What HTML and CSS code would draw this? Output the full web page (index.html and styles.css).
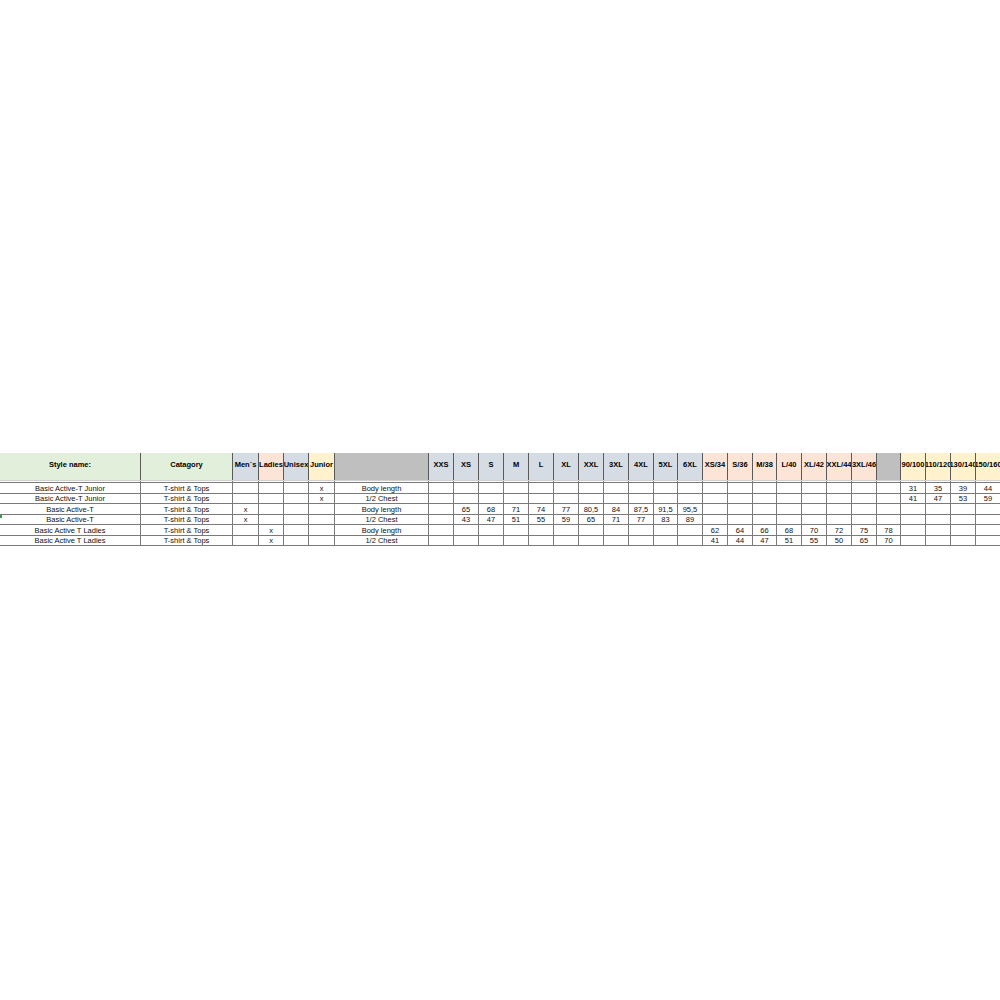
FILE: index.html
```html
<!DOCTYPE html>
<html>
<head>
<meta charset="utf-8">
<link rel="stylesheet" href="styles.css">
</head>
<body>
<div class="sheet">
<span class="flag"></span>
<table>
<colgroup>
<col class="w141"><col class="w92"><col class="w26"><col class="w25"><col class="w25"><col class="w26"><col class="w94">
<col class="w25"><col class="w25"><col class="w25"><col class="w25"><col class="w25"><col class="w25"><col class="w25"><col class="w25"><col class="w25"><col class="w24"><col class="w25">
<col class="w25"><col class="w25"><col class="w24"><col class="w25"><col class="w25"><col class="w25"><col class="w25">
<col class="w24">
<col class="w25"><col class="w25"><col class="w25"><col class="w25">
<col class="w40">
</colgroup>
<thead>
<tr>
<th class="g"><div class="c">Style name:</div></th>
<th class="g"><div class="c">Catagory</div></th>
<th class="b"><div class="c">Men`s</div></th>
<th class="p"><div class="c">Ladies</div></th>
<th class="b"><div class="c">Unisex</div></th>
<th class="y"><div class="c">Junior</div></th>
<th class="k"><div class="c"></div></th>
<th class="b"><div class="c">XXS</div></th>
<th class="b"><div class="c">XS</div></th>
<th class="b"><div class="c">S</div></th>
<th class="b"><div class="c">M</div></th>
<th class="b"><div class="c">L</div></th>
<th class="b"><div class="c">XL</div></th>
<th class="b"><div class="c">XXL</div></th>
<th class="b"><div class="c">3XL</div></th>
<th class="b"><div class="c">4XL</div></th>
<th class="b"><div class="c">5XL</div></th>
<th class="b"><div class="c">6XL</div></th>
<th class="p"><div class="c">XS/34</div></th>
<th class="p"><div class="c">S/36</div></th>
<th class="p"><div class="c">M/38</div></th>
<th class="p"><div class="c">L/40</div></th>
<th class="p"><div class="c">XL/42</div></th>
<th class="p"><div class="c">XXL/44</div></th>
<th class="p"><div class="c">3XL/46</div></th>
<th class="k"><div class="c"></div></th>
<th class="y"><div class="c">90/100</div></th>
<th class="y"><div class="c">110/120</div></th>
<th class="y"><div class="c">130/140</div></th>
<th class="y"><div class="c">150/160</div></th>
<th class="y"><div class="c"></div></th>
</tr>
</thead>
<tbody>
<tr class="gap"><td></td><td></td><td></td><td></td><td></td><td></td><td></td><td></td><td></td><td></td><td></td><td></td><td></td><td></td><td></td><td></td><td></td><td></td><td></td><td></td><td></td><td></td><td></td><td></td><td></td><td></td><td></td><td></td><td></td><td></td><td></td></tr>
<tr class="r11">
<td>Basic Active-T Junior</td><td>T-shirt &amp; Tops</td><td></td><td></td><td></td><td>x</td><td>Body length</td>
<td></td><td></td><td></td><td></td><td></td><td></td><td></td><td></td><td></td><td></td><td></td>
<td></td><td></td><td></td><td></td><td></td><td></td><td></td>
<td></td>
<td>31</td><td>35</td><td>39</td><td>44</td><td></td>
</tr>
<tr class="r10">
<td>Basic Active-T Junior</td><td>T-shirt &amp; Tops</td><td></td><td></td><td></td><td>x</td><td>1/2 Chest</td>
<td></td><td></td><td></td><td></td><td></td><td></td><td></td><td></td><td></td><td></td><td></td>
<td></td><td></td><td></td><td></td><td></td><td></td><td></td>
<td></td>
<td>41</td><td>47</td><td>53</td><td>59</td><td></td>
</tr>
<tr class="r11">
<td>Basic Active-T</td><td>T-shirt &amp; Tops</td><td>x</td><td></td><td></td><td></td><td>Body length</td>
<td></td><td>65</td><td>68</td><td>71</td><td>74</td><td>77</td><td>80,5</td><td>84</td><td>87,5</td><td>91,5</td><td>95,5</td>
<td></td><td></td><td></td><td></td><td></td><td></td><td></td>
<td></td>
<td></td><td></td><td></td><td></td><td></td>
</tr>
<tr class="r10">
<td>Basic Active-T</td><td>T-shirt &amp; Tops</td><td>x</td><td></td><td></td><td></td><td>1/2 Chest</td>
<td></td><td>43</td><td>47</td><td>51</td><td>55</td><td>59</td><td>65</td><td>71</td><td>77</td><td>83</td><td>89</td>
<td></td><td></td><td></td><td></td><td></td><td></td><td></td>
<td></td>
<td></td><td></td><td></td><td></td><td></td>
</tr>
<tr class="r11">
<td>Basic Active T Ladies</td><td>T-shirt &amp; Tops</td><td></td><td>x</td><td></td><td></td><td>Body length</td>
<td></td><td></td><td></td><td></td><td></td><td></td><td></td><td></td><td></td><td></td><td></td>
<td>62</td><td>64</td><td>66</td><td>68</td><td>70</td><td>72</td><td>75</td>
<td>78</td>
<td></td><td></td><td></td><td></td><td></td>
</tr>
<tr class="r10">
<td>Basic Active T Ladies</td><td>T-shirt &amp; Tops</td><td></td><td>x</td><td></td><td></td><td>1/2 Chest</td>
<td></td><td></td><td></td><td></td><td></td><td></td><td></td><td></td><td></td><td></td><td></td>
<td>41</td><td>44</td><td>47</td><td>51</td><td>55</td><td>50</td><td>65</td>
<td>70</td>
<td></td><td></td><td></td><td></td><td></td>
</tr>
</tbody>
</table>
</div>
</body>
</html>
```

FILE: styles.css
```css
html, body {
  margin: 0;
  padding: 0;
  background: #ffffff;
  overflow: hidden;
}

.sheet {
  position: relative;
  width: 1000px;
  height: 1000px;
  overflow: hidden;
  box-sizing: border-box;
  padding-top: 453px;
}

.flag {
  position: absolute;
  left: 0;
  top: 515px;
  width: 2px;
  height: 3px;
  background: #3c9a4c;
}

table {
  border-collapse: collapse;
  table-layout: fixed;
  width: 1041px;
  margin-left: -1px;
  font-family: "Liberation Sans", Arial, sans-serif;
  font-size: 7.5px;
  color: #111111;
}

.w141 { width: 141px; }
.w94 { width: 94px; }
.w92 { width: 92px; }
.w40 { width: 40px; }
.w26 { width: 26px; }
.w25 { width: 25px; }
.w24 { width: 24px; }

th {
  height: 23px;
  padding: 0 0 4px 0;
  font-weight: bold;
  color: #000000;
  border-left: 1px solid #5a5a5a;
  border-right: 1px solid #5a5a5a;
  border-bottom: 1px solid #d0d0d0;
  border-top: none;
  vertical-align: middle;
  overflow: hidden;
}

th .c {
  display: flex;
  justify-content: center;
  white-space: nowrap;
  overflow: hidden;
}

.g { background: #e2efda; }
.b { background: #d6dce4; }
.p { background: #fce4d6; }
.y { background: #fff2cc; }
.k { background: #bfbfbf; }

td {
  padding: 0;
  border: 1px solid #7a7a7a;
  text-align: center;
  vertical-align: middle;
  white-space: nowrap;
  overflow: hidden;
  line-height: 9px;
}

tr.gap td {
  height: 1px;
  border-top: none;
  border-bottom: none;
}

tr.r11 td { height: 10px; }
tr.r10 td { height: 9px; }
```
